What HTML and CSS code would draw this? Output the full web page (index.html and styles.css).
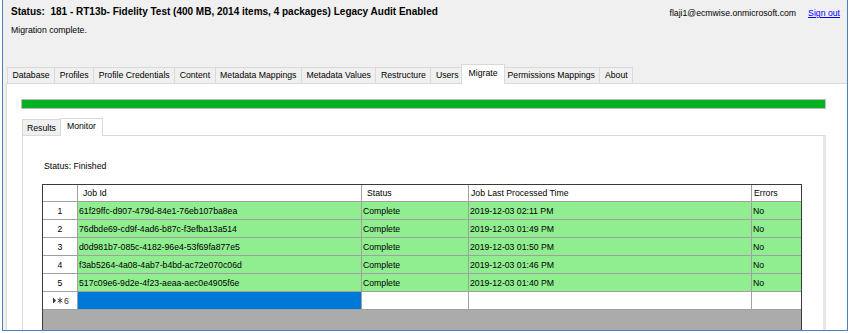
FILE: index.html
```html
<!DOCTYPE html>
<html lang="en">
<head>
    <meta charset="UTF-8">
    <title>Migrate - Monitor</title>
    <link rel="stylesheet" href="styles.css">
</head>
<body>
    <div class="window">
        <div class="header">
            <div class="header-text">
                <div class="title">Status:&nbsp; 181 - RT13b- Fidelity Test (400 MB, 2014 items, 4 packages) Legacy Audit Enabled</div>
                <div class="message">Migration complete.</div>
            </div>
            <div class="account">
                <span class="user">flaji1@ecmwise.onmicrosoft.com</span>
                <a class="sign-out" href="#">Sign out</a>
            </div>
        </div>

        <div class="tab-strip">
            <div class="tab">Database</div>
            <div class="tab">Profiles</div>
            <div class="tab">Profile Credentials</div>
            <div class="tab">Content</div>
            <div class="tab">Metadata Mappings</div>
            <div class="tab">Metadata Values</div>
            <div class="tab">Restructure</div>
            <div class="tab">Users</div>
            <div class="tab active">Migrate</div>
            <div class="tab">Permissions Mappings</div>
            <div class="tab">About</div>
        </div>

        <div class="tab-panel">
            <div class="progress"><div class="progress-fill"></div></div>

            <div class="sub-tabs">
                <div class="sub-tab">Results</div>
                <div class="sub-tab active">Monitor</div>
            </div>

            <div class="sub-panel">
                <div class="run-status">Status: Finished</div>

                <div class="grid">
                    <div class="grid-row grid-head">
                        <div class="cell row-head"></div>
                        <div class="cell indent">Job Id</div>
                        <div class="cell indent">Status</div>
                        <div class="cell">Job Last Processed Time</div>
                        <div class="cell">Errors</div>
                    </div>
                    <div class="grid-row done">
                        <div class="cell row-head">1</div>
                        <div class="cell">61f29ffc-d907-479d-84e1-76eb107ba8ea</div>
                        <div class="cell">Complete</div>
                        <div class="cell">2019-12-03 02:11 PM</div>
                        <div class="cell">No</div>
                    </div>
                    <div class="grid-row done">
                        <div class="cell row-head">2</div>
                        <div class="cell">76dbde69-cd9f-4ad6-b87c-f3efba13a514</div>
                        <div class="cell">Complete</div>
                        <div class="cell">2019-12-03 01:49 PM</div>
                        <div class="cell">No</div>
                    </div>
                    <div class="grid-row done">
                        <div class="cell row-head">3</div>
                        <div class="cell">d0d981b7-085c-4182-96e4-53f69fa877e5</div>
                        <div class="cell">Complete</div>
                        <div class="cell">2019-12-03 01:50 PM</div>
                        <div class="cell">No</div>
                    </div>
                    <div class="grid-row done">
                        <div class="cell row-head">4</div>
                        <div class="cell">f3ab5264-4a08-4ab7-b4bd-ac72e070c06d</div>
                        <div class="cell">Complete</div>
                        <div class="cell">2019-12-03 01:46 PM</div>
                        <div class="cell">No</div>
                    </div>
                    <div class="grid-row done">
                        <div class="cell row-head">5</div>
                        <div class="cell">517c09e6-9d2e-4f23-aeaa-aec0e4905f6e</div>
                        <div class="cell">Complete</div>
                        <div class="cell">2019-12-03 01:40 PM</div>
                        <div class="cell">No</div>
                    </div>
                    <div class="grid-row new-row">
                        <div class="cell row-head">
                            <svg class="new-mark" width="10" height="7" viewBox="0 0 10 7">
                                <polygon points="0,0.5 3,3.5 0,6.5" fill="#333"/>
                                <path d="M7 0.5 V6.5 M4.6 2 L9.4 5 M4.6 5 L9.4 2" stroke="#333" stroke-width="0.9" fill="none"/>
                            </svg>6
                        </div>
                        <div class="cell selected"></div>
                        <div class="cell"></div>
                        <div class="cell"></div>
                        <div class="cell"></div>
                    </div>
                </div>
            </div>
        </div>
    </div>
</body>
</html>
```

FILE: styles.css
```css
* {
    box-sizing: border-box;
}

body {
    margin: 0;
    background-color: #fff;
    font-family: "Liberation Sans", Arial, sans-serif;
    font-size: 8.7px;
    color: #000;
}

.window {
    margin-left: 2px;
    width: 846px;
    height: 331px;
    background-color: #f0f0f0;
    border: 1px solid #4a7fc1;
    border-top: none;
    display: flex;
    flex-direction: column;
    overflow: hidden;
}

/* header */

.header {
    height: 64px;
    flex-shrink: 0;
    display: flex;
    justify-content: space-between;
    padding: 0 7px 0 8px;
}

.title {
    margin-top: 6px;
    font-size: 10px;
    font-weight: bold;
    line-height: 12px;
}

.message {
    margin-top: 6px;
    line-height: 12px;
}

.account {
    margin-top: 7px;
    line-height: 12px;
    display: flex;
    gap: 12px;
}

.sign-out {
    color: #0000ff;
}

/* main tabs */

.tab-strip {
    height: 19px;
    flex-shrink: 0;
    display: flex;
    align-items: flex-end;
    padding-left: 4px;
}

.tab {
    height: 16px;
    padding: 0 4.5px;
    margin-right: -1px;
    line-height: 15px;
    white-space: nowrap;
    background-color: #f0f0f0;
    border: 1px solid #d9d9d9;
    border-bottom: none;
}

.tab.active {
    position: relative;
    z-index: 1;
    height: 20px;
    margin: 0 -3px -1px -2px;
    padding: 0 6.5px;
    line-height: 16px;
    background-color: #fff;
}

.tab-panel {
    flex: 1;
    min-height: 0;
    margin-left: 3px;
    background-color: #fff;
    border-top: 1px solid #d9d9d9;
    border-left: 1px solid #d9d9d9;
    overflow: hidden;
}

.progress {
    height: 10px;
    margin: 15px 21px 0 14px;
    border: 1px solid #bcbcbc;
    background-color: #e6e6e6;
}

.progress-fill {
    width: 100%;
    height: 100%;
    background-color: #06b025;
}

/* sub tabs */

.sub-tabs {
    height: 17px;
    margin: 9px 0 0 15px;
    display: flex;
    align-items: flex-end;
}

.sub-tab {
    height: 16px;
    padding: 0 4px;
    margin-right: -1px;
    line-height: 16px;
    background-color: #f0f0f0;
    border: 1px solid #d9d9d9;
    border-bottom: none;
}

.sub-tab.active {
    position: relative;
    z-index: 1;
    height: 18px;
    margin-bottom: -1px;
    padding: 0 6px;
    line-height: 14px;
    background-color: #fff;
}

.sub-panel {
    height: 300px;
    margin: 0 21px 0 15px;
    border: 1px solid #dadada;
    border-right: 3px solid #e6e6e6;
}

.run-status {
    margin: 24px 0 0 21px;
    line-height: 12px;
}

/* data grid */

.grid {
    width: 760px;
    height: 200px;
    margin: 12px 0 0 19px;
    background-color: #ababab;
    border: 1px solid #3a3a3a;
    border-bottom: none;
}

.grid-row {
    display: grid;
    grid-template-columns: 35px 284px 107px 283px 49px;
    height: 18px;
}

.grid-head {
    height: 17px;
}

.cell {
    display: flex;
    align-items: center;
    padding-left: 1px;
    white-space: nowrap;
    overflow: hidden;
    background-color: #fff;
    border-right: 1px solid #a0a0a0;
    border-bottom: 1px solid #a0a0a0;
}

.cell:last-child {
    border-right: none;
}

.grid-head .cell {
    padding-left: 2px;
}

.grid-head .indent {
    padding-left: 5px;
}

.row-head {
    justify-content: center;
    padding-left: 0;
}

.done .cell {
    background-color: #90ee90;
}

.done .row-head {
    background-color: #fff;
}

.new-row .row-head {
    color: #333;
    padding-left: 2px;
}

.new-mark {
    margin-right: 1px;
}

.cell.selected {
    background-color: #0078d7;
}
```
